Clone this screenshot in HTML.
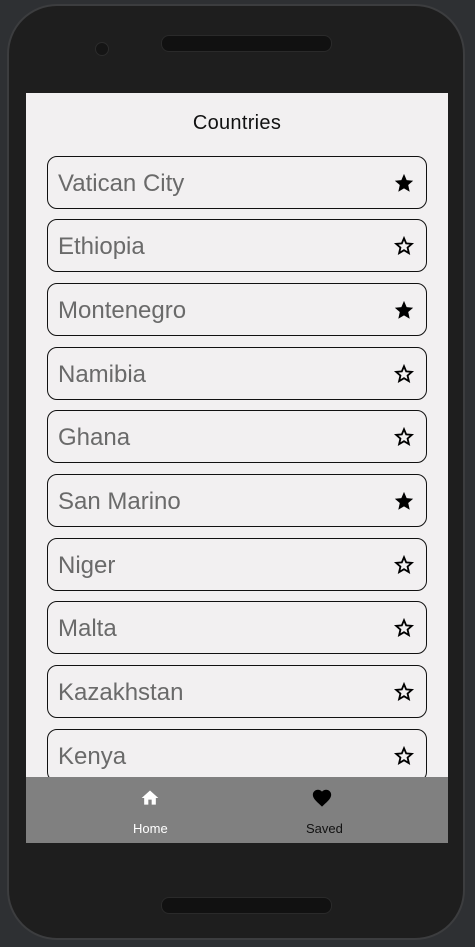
<!DOCTYPE html>
<html><head><style>
body{margin:0;width:475px;height:947px;background:#2e3033;position:relative;overflow:hidden;font-family:"Liberation Sans",Roboto,sans-serif}
.phone{position:absolute;left:7px;top:4px;width:458px;height:936px;border-radius:50px;background:#1e1e1e;border:2px solid #3c3d3f;box-sizing:border-box}
.spk{position:absolute;left:152px;width:169px;height:15px;border-radius:8px;background:#111;border:1px solid #2a2a2a}
.cam{position:absolute;left:86px;top:36px;width:12px;height:12px;border-radius:50%;background:#151515;border:1px solid #2c2c2c}
.screen{position:absolute;left:26px;top:93px;width:422px;height:750px;background:#f2f0f1;overflow:hidden}
h1{margin:0;position:absolute;top:19px;width:100%;text-align:center;font-size:20px;font-weight:normal;color:#111;letter-spacing:.3px}
.card{position:absolute;left:21px;width:380px;height:53px;border:1.5px solid #111;border-radius:10px;box-sizing:border-box}
.card span{position:absolute;left:10px;top:13px;font-size:24px;color:#6a6a6a}
.card svg{position:absolute;right:11px;top:15px}
.nav{position:absolute;left:0;top:684px;width:422px;height:66px;background:#808080}
.nav .l{position:absolute;top:44px;font-size:13px}
</style></head><body>
<div class="phone"><div class="cam"></div><div class="spk" style="top:29px"></div><div class="spk" style="top:891px"></div></div>
<div class="screen">
<h1>Countries</h1>
<div class="card" style="top:63px"><span>Vatican City</span><svg width="22" height="22" viewBox="0 0 24 24"><path d="M12 2l2.9 6.9 7.1.6-5.4 4.7 1.6 7.3L12 17.8 5.8 21.5l1.6-7.3L2 9.5l7.1-.6z" fill="#000"/></svg></div>
<div class="card" style="top:126px"><span>Ethiopia</span><svg width="22" height="22" viewBox="0 0 24 24"><path d="M12 3.5l2.4 5.7 6.1.5-4.6 4 1.4 6.1L12 16.6l-5.3 3.2 1.4-6.1-4.6-4 6.1-.5z" fill="none" stroke="#000" stroke-width="2"/></svg></div>
<div class="card" style="top:190px"><span>Montenegro</span><svg width="22" height="22" viewBox="0 0 24 24"><path d="M12 2l2.9 6.9 7.1.6-5.4 4.7 1.6 7.3L12 17.8 5.8 21.5l1.6-7.3L2 9.5l7.1-.6z" fill="#000"/></svg></div>
<div class="card" style="top:254px"><span>Namibia</span><svg width="22" height="22" viewBox="0 0 24 24"><path d="M12 3.5l2.4 5.7 6.1.5-4.6 4 1.4 6.1L12 16.6l-5.3 3.2 1.4-6.1-4.6-4 6.1-.5z" fill="none" stroke="#000" stroke-width="2"/></svg></div>
<div class="card" style="top:317px"><span>Ghana</span><svg width="22" height="22" viewBox="0 0 24 24"><path d="M12 3.5l2.4 5.7 6.1.5-4.6 4 1.4 6.1L12 16.6l-5.3 3.2 1.4-6.1-4.6-4 6.1-.5z" fill="none" stroke="#000" stroke-width="2"/></svg></div>
<div class="card" style="top:381px"><span>San Marino</span><svg width="22" height="22" viewBox="0 0 24 24"><path d="M12 2l2.9 6.9 7.1.6-5.4 4.7 1.6 7.3L12 17.8 5.8 21.5l1.6-7.3L2 9.5l7.1-.6z" fill="#000"/></svg></div>
<div class="card" style="top:445px"><span>Niger</span><svg width="22" height="22" viewBox="0 0 24 24"><path d="M12 3.5l2.4 5.7 6.1.5-4.6 4 1.4 6.1L12 16.6l-5.3 3.2 1.4-6.1-4.6-4 6.1-.5z" fill="none" stroke="#000" stroke-width="2"/></svg></div>
<div class="card" style="top:508px"><span>Malta</span><svg width="22" height="22" viewBox="0 0 24 24"><path d="M12 3.5l2.4 5.7 6.1.5-4.6 4 1.4 6.1L12 16.6l-5.3 3.2 1.4-6.1-4.6-4 6.1-.5z" fill="none" stroke="#000" stroke-width="2"/></svg></div>
<div class="card" style="top:572px"><span>Kazakhstan</span><svg width="22" height="22" viewBox="0 0 24 24"><path d="M12 3.5l2.4 5.7 6.1.5-4.6 4 1.4 6.1L12 16.6l-5.3 3.2 1.4-6.1-4.6-4 6.1-.5z" fill="none" stroke="#000" stroke-width="2"/></svg></div>
<div class="card" style="top:636px"><span>Kenya</span><svg width="22" height="22" viewBox="0 0 24 24"><path d="M12 3.5l2.4 5.7 6.1.5-4.6 4 1.4 6.1L12 16.6l-5.3 3.2 1.4-6.1-4.6-4 6.1-.5z" fill="none" stroke="#000" stroke-width="2"/></svg></div>
<div class="nav">
<svg style="position:absolute;left:114px;top:11px" width="20" height="20" viewBox="0 0 24 24"><path d="M10 20v-6h4v6h5v-8h3L12 3 2 12h3v8z" fill="#fff"/></svg>
<div class="l" style="left:107px;color:#fff">Home</div>
<svg style="position:absolute;left:285px;top:10px" width="22" height="22" viewBox="0 0 24 24"><path d="M12 21.35l-1.45-1.32C5.4 15.36 2 12.28 2 8.5 2 5.42 4.42 3 7.5 3c1.74 0 3.41.81 4.5 2.09C13.09 3.81 14.76 3 16.5 3 19.58 3 22 5.42 22 8.5c0 3.78-3.4 6.86-8.55 11.54z" fill="#000"/></svg>
<div class="l" style="left:280px;color:#111">Saved</div>
</div>
</div>
</body></html>
